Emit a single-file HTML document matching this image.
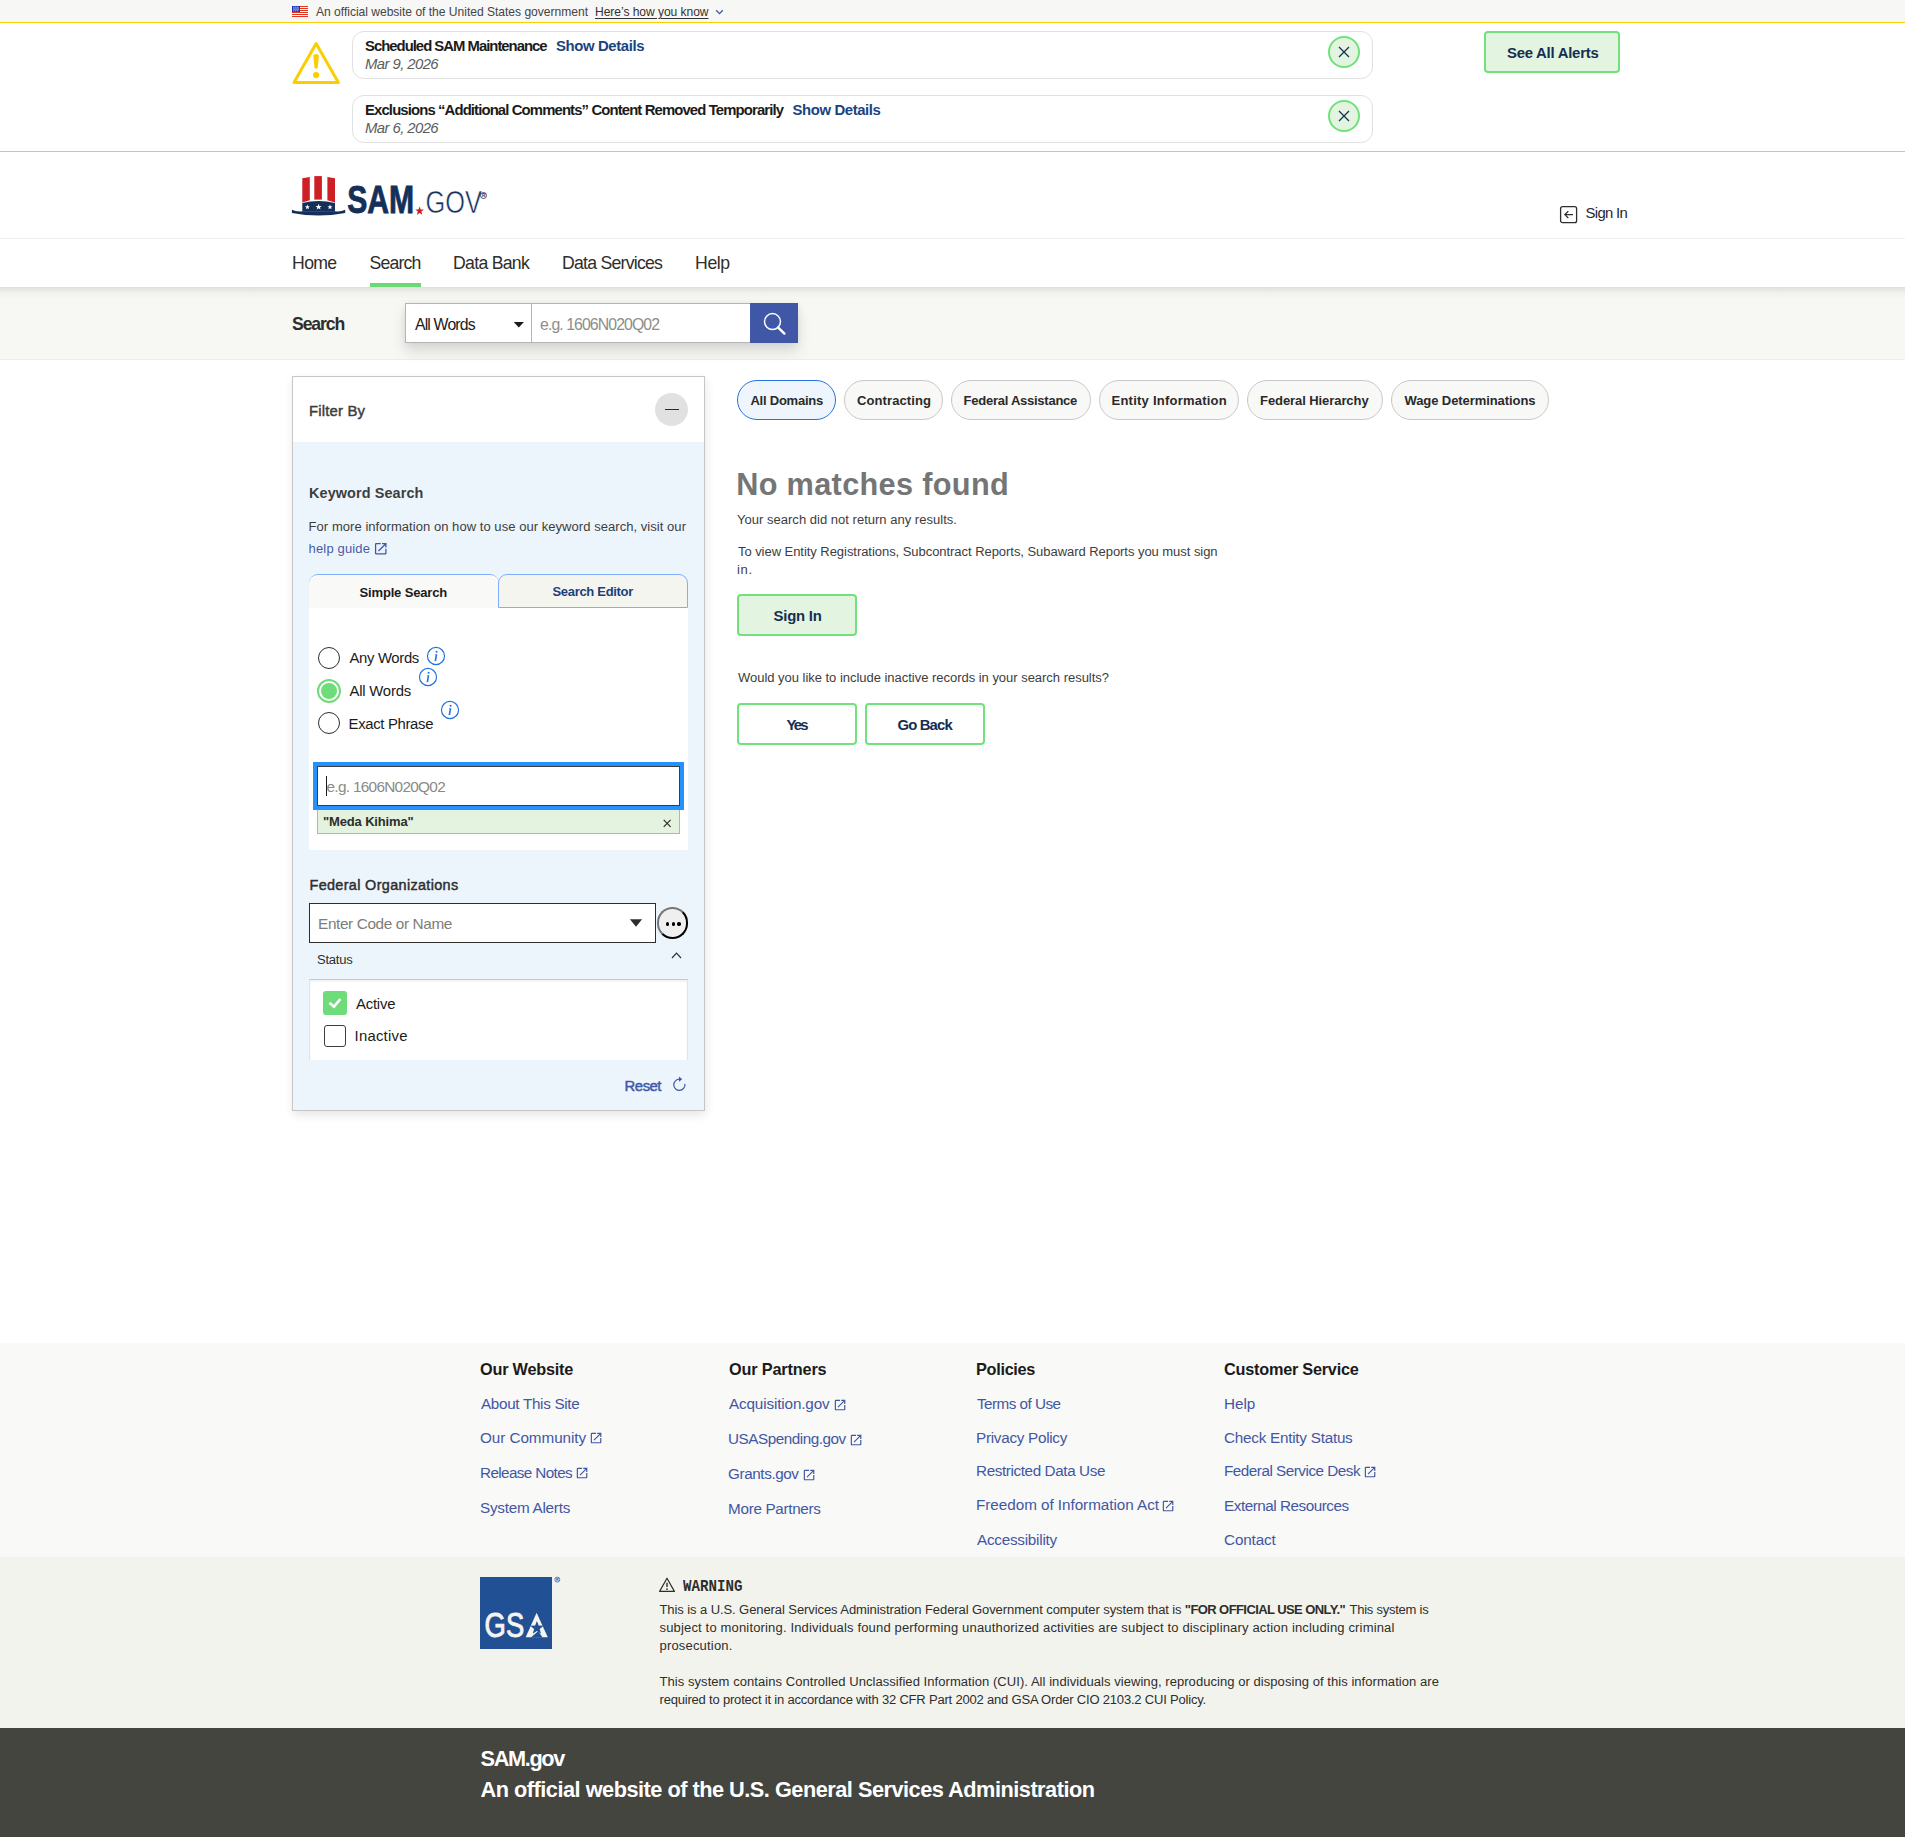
<!DOCTYPE html>
<html lang="en"><head><meta charset="utf-8"><title>SAM.gov | Search</title>
<style>
html,body{margin:0;padding:0;background:#fff}
body{width:1905px;height:1837px;position:relative;overflow:hidden;font-family:"Liberation Sans",sans-serif}
div,svg,span.t{position:absolute;box-sizing:border-box}
span.t{white-space:pre;line-height:1;display:block}
.m{font-family:"Liberation Mono",monospace}
svg{overflow:visible}
</style></head><body>
<div style="left:0px;top:0px;width:1905px;height:22px;background:#f7f7f5"></div>
<div style="left:0px;top:22px;width:1905px;height:1px;background:#face00"></div>
<svg style="left:292px;top:6px" width="16" height="11" viewBox="0 0 16 11"><rect width="16" height="11" fill="#fff"/><rect y="0" width="16" height="1" fill="#e0371f"/><rect y="2" width="16" height="1" fill="#e0371f"/><rect y="4" width="16" height="1" fill="#e0371f"/><rect y="6" width="16" height="1" fill="#e0371f"/><rect y="8" width="16" height="1" fill="#e0371f"/><rect y="10" width="16" height="1" fill="#e0371f"/><rect width="8" height="6" fill="#1e33b1"/><rect x="1.1" y="0.7" width="0.8" height="0.8" fill="#fff"/><rect x="1.1" y="2.6" width="0.8" height="0.8" fill="#fff"/><rect x="1.1" y="4.5" width="0.8" height="0.8" fill="#fff"/><rect x="3.1" y="0.7" width="0.8" height="0.8" fill="#fff"/><rect x="3.1" y="2.6" width="0.8" height="0.8" fill="#fff"/><rect x="3.1" y="4.5" width="0.8" height="0.8" fill="#fff"/><rect x="5.1" y="0.7" width="0.8" height="0.8" fill="#fff"/><rect x="5.1" y="2.6" width="0.8" height="0.8" fill="#fff"/><rect x="5.1" y="4.5" width="0.8" height="0.8" fill="#fff"/><rect x="2.1" y="1.6" width="0.8" height="0.8" fill="#fff"/><rect x="2.1" y="3.5" width="0.8" height="0.8" fill="#fff"/><rect x="4.1" y="1.6" width="0.8" height="0.8" fill="#fff"/><rect x="4.1" y="3.5" width="0.8" height="0.8" fill="#fff"/><rect x="6.1" y="1.6" width="0.8" height="0.8" fill="#fff"/><rect x="6.1" y="3.5" width="0.8" height="0.8" fill="#fff"/></svg>
<svg style="left:715px;top:8px" width="9" height="8" viewBox="0 0 9 8"><path d="M1.2 2.3 L4.5 5.6 L7.8 2.3" fill="none" stroke="#3f57a6" stroke-width="1.3"/></svg>
<div style="left:0px;top:151px;width:1905px;height:1px;background:#face00"></div>
<svg style="left:288px;top:38px" width="56" height="50" viewBox="0 0 56 50"><path d="M28.1 5.6 L6 44.5 L50.4 44.5 Z" fill="none" stroke="#face00" stroke-width="3" stroke-linejoin="round"/><path d="M25.3 17.4 Q28.1 14.6 30.9 17.4 L29.7 29.8 Q28.1 31.6 26.5 29.8 Z" fill="#face00"/><circle cx="28.1" cy="37.1" r="3.1" fill="#face00"/></svg>
<div style="left:352px;top:31px;width:1021px;height:48px;border:1px solid #dfe1e2;border-radius:12px;background:#fff"></div>
<div style="left:1328px;top:36px;width:32px;height:32px;border:2px solid #70e17b;border-radius:50%;background:#e3f5e1"></div>
<svg style="left:1338px;top:46px" width="12" height="12" viewBox="0 0 12 12"><path d="M1 1 L11 11 M11 1 L1 11" stroke="#162e51" stroke-width="1.3" fill="none"/></svg>
<div style="left:352px;top:95px;width:1021px;height:48px;border:1px solid #dfe1e2;border-radius:12px;background:#fff"></div>
<div style="left:1328px;top:100px;width:32px;height:32px;border:2px solid #70e17b;border-radius:50%;background:#e3f5e1"></div>
<svg style="left:1338px;top:110px" width="12" height="12" viewBox="0 0 12 12"><path d="M1 1 L11 11 M11 1 L1 11" stroke="#162e51" stroke-width="1.3" fill="none"/></svg>
<div style="left:1484px;top:31px;width:136px;height:42px;border:2px solid #70e17b;border-radius:4px;background:#e3f5e1"></div>
<svg style="left:0px;top:0px" width="600" height="240" viewBox="0 0 600 240"><polygon points="302.3,178.2 309.8,177 309.8,200.3 302.3,202.4" fill="#cd2026"/><rect x="314.3" y="176.1" width="7.6" height="23.5" fill="#cd2026"/><polygon points="327.4,177 335,178.2 335,202.4 327.4,200.3" fill="#cd2026"/><path d="M302.3 203 Q318.6 199 335 203 L335 211.5 L302.3 211.5 Z" fill="#14305a"/><path d="M291.9 209.7 Q296 211.8 302.5 211.3 L335 211.3 Q341 211.8 345.2 209.7 L345.2 212.9 Q318.6 218 291.9 212.9 Z" fill="#14305a"/><polygon points="307.40,204.60 308.04,206.32 309.87,206.40 308.44,207.54 308.93,209.30 307.40,208.29 305.87,209.30 306.36,207.54 304.93,206.40 306.76,206.32" fill="#fff"/><polygon points="318.60,203.80 319.39,205.91 321.64,206.01 319.88,207.42 320.48,209.59 318.60,208.34 316.72,209.59 317.32,207.42 315.56,206.01 317.81,205.91" fill="#fff"/><polygon points="330.00,204.60 330.64,206.32 332.47,206.40 331.04,207.54 331.53,209.30 330.00,208.29 328.47,209.30 328.96,207.54 327.53,206.40 329.36,206.32" fill="#fff"/><text x="347.2" y="212.9" font-family="Liberation Sans" font-weight="700" font-size="38.7" fill="#14305a" stroke="#14305a" stroke-width="0.9" textLength="66.9" lengthAdjust="spacingAndGlyphs">SAM</text><polygon points="419.60,206.50 420.71,209.47 423.88,209.61 421.40,211.58 422.25,214.64 419.60,212.89 416.95,214.64 417.80,211.58 415.32,209.61 418.49,209.47" fill="#cd2026"/><text x="425.6" y="213.2" font-family="Liberation Sans" font-size="31" fill="#14305a" stroke="#fff" stroke-width="0.55" textLength="56.4" lengthAdjust="spacingAndGlyphs">GOV</text><circle cx="483.5" cy="195.5" r="3" fill="none" stroke="#14305a" stroke-width="0.8"/><text x="481.9" y="197.3" font-family="Liberation Sans" font-weight="700" font-size="4.8" fill="#14305a">R</text></svg>
<svg style="left:1559px;top:205px" width="20" height="20" viewBox="0 0 20 20"><rect x="1.6" y="1.7" width="16" height="16" rx="2" fill="none" stroke="#2e2e2a" stroke-width="1.3"/><path d="M14 9.6 H6 M9.3 6.2 L5.8 9.6 L9.3 13" fill="none" stroke="#2e2e2a" stroke-width="1.2"/></svg>
<div style="left:0px;top:238px;width:1905px;height:1px;background:#f0f0ec"></div>
<div style="left:0px;top:287px;width:1905px;height:73px;background:#f7f7f4;border-bottom:1px solid #ededea"></div>
<div style="left:0px;top:287px;width:1905px;height:12px;background:linear-gradient(rgba(0,0,0,.10),rgba(0,0,0,.03) 45%,rgba(0,0,0,0))"></div>
<div style="left:370px;top:283px;width:51px;height:4px;background:#6ad974"></div>
<div style="left:405px;top:303px;width:393px;height:40px;background:#fff;box-shadow:0 8px 14px rgba(0,0,0,.13), 0 0 6px rgba(0,0,0,.06)"></div>
<div style="left:405px;top:303px;width:127px;height:40px;border:1px solid #b5b5b2;background:#fff"></div>
<div style="left:531px;top:303px;width:219px;height:40px;border:1px solid #b5b5b2;border-right:0;background:#fff"></div>
<svg style="left:513px;top:321px" width="12" height="8" viewBox="0 0 12 8"><path d="M0.7 1 H10.9 L5.8 6.6 Z" fill="#1b1b1b"/></svg>
<div style="left:750px;top:303px;width:48px;height:40px;background:#3f57a6"></div>
<svg style="left:760px;top:309px" width="30" height="30" viewBox="0 0 30 30"><circle cx="12.5" cy="12.6" r="8" fill="none" stroke="#fff" stroke-width="1.5"/><path d="M18 18.4 L24.4 24.6" stroke="#fff" stroke-width="2.4" stroke-linecap="round"/></svg>
<div style="left:292px;top:376px;width:413px;height:735px;border:1px solid #c6c6c6;background:#edf5fc;box-shadow:1px 4px 9px rgba(0,0,0,.10)"></div>
<div style="left:293px;top:377px;width:411px;height:65px;background:#fff"></div>
<div style="left:655px;top:393px;width:33px;height:33px;border-radius:50%;background:#e1e1e1"></div>
<div style="left:665px;top:409px;width:14px;height:1.4px;background:#0f2f66"></div>
<svg style="left:373.27px;top:540.87px" width="15.47" height="15.47" viewBox="0 0 24 24"><path d="M19 19H5V5h7V3H5a2 2 0 00-2 2v14a2 2 0 002 2h14c1.1 0 2-.9 2-2v-7h-2v7zM14 3v2h3.59l-9.83 9.83 1.41 1.41L19 6.41V10h2V3h-7z" fill="#3f57a6"/></svg>
<div style="left:309px;top:607px;width:379px;height:243px;background:#fff"></div>
<div style="left:309px;top:574px;width:190px;height:34px;background:#f9f9f7;border-top:1px solid #81aefc;border-radius:9px 9px 0 0"></div>
<div style="left:498px;top:574px;width:190px;height:34px;background:#f5f5f0;border:1px solid #81aefc;border-radius:9px 9px 0 0"></div>
<div style="left:318px;top:647px;width:22px;height:22px;border:1.5px solid #2e2e2e;border-radius:50%;background:#fff"></div>
<svg style="left:426.25px;top:646.3px" width="20" height="20" viewBox="0 0 20 20"><circle cx="10" cy="10" r="8.55" fill="none" stroke="#2672de" stroke-width="1.2"/><circle cx="10.6" cy="5.7" r="1.05" fill="#2672de"/><path d="M10.5 8.3 L9.4 14.9" stroke="#2672de" stroke-width="1.6" fill="none"/><path d="M9.3 8.7 H10.6 M8.6 14.6 H10.0" stroke="#2672de" stroke-width="0.8" fill="none"/></svg>
<div style="left:317px;top:679px;width:24px;height:24px;border:2px solid #6fdc7a;border-radius:50%;background:#fff"></div>
<div style="left:321px;top:683px;width:16px;height:16px;border-radius:50%;background:#6fdc7a"></div>
<svg style="left:418.35px;top:667.1px" width="20" height="20" viewBox="0 0 20 20"><circle cx="10" cy="10" r="8.55" fill="none" stroke="#2672de" stroke-width="1.2"/><circle cx="10.6" cy="5.7" r="1.05" fill="#2672de"/><path d="M10.5 8.3 L9.4 14.9" stroke="#2672de" stroke-width="1.6" fill="none"/><path d="M9.3 8.7 H10.6 M8.6 14.6 H10.0" stroke="#2672de" stroke-width="0.8" fill="none"/></svg>
<div style="left:318px;top:712px;width:22px;height:22px;border:1.5px solid #2e2e2e;border-radius:50%;background:#fff"></div>
<svg style="left:440.35px;top:700.2px" width="20" height="20" viewBox="0 0 20 20"><circle cx="10" cy="10" r="8.55" fill="none" stroke="#2672de" stroke-width="1.2"/><circle cx="10.6" cy="5.7" r="1.05" fill="#2672de"/><path d="M10.5 8.3 L9.4 14.9" stroke="#2672de" stroke-width="1.6" fill="none"/><path d="M9.3 8.7 H10.6 M8.6 14.6 H10.0" stroke="#2672de" stroke-width="0.8" fill="none"/></svg>
<div style="left:317px;top:809px;width:363px;height:25px;border:1px solid #70e17b;background:#e3f3e0"></div>
<div style="left:313px;top:762px;width:371px;height:48px;background:#2491ff"></div>
<div style="left:317px;top:766px;width:363px;height:40px;border:1px solid #3d3d3d;background:#fff"></div>
<svg style="left:662px;top:818px" width="10" height="10" viewBox="0 0 10 10"><path d="M1.7 1.9 L8.6 8.8 M8.6 1.9 L1.7 8.8" stroke="#2e2e2a" stroke-width="1.2" fill="none"/></svg>
<div style="left:309px;top:903px;width:347px;height:40px;border:1px solid #2e2e2a;background:#fff"></div>
<svg style="left:629px;top:918px" width="14" height="10" viewBox="0 0 14 10"><path d="M0.9 1.3 H13.1 L7 8.7 Z" fill="#2e2e2a"/></svg>
<div style="left:656.7px;top:907px;width:31.5px;height:31.5px;border:2px solid;border-color:#767676 #000 #000 #767676;border-radius:50%;background:#efefef"></div>
<div style="left:665.6px;top:922.4px;width:3.4px;height:3.4px;border-radius:50%;background:#000"></div>
<div style="left:671.5px;top:922.4px;width:3.4px;height:3.4px;border-radius:50%;background:#000"></div>
<div style="left:677.4px;top:922.4px;width:3.4px;height:3.4px;border-radius:50%;background:#000"></div>
<svg style="left:670px;top:949.6px" width="14" height="10" viewBox="0 0 14 10"><path d="M2 8 L6.5 3.2 L11 8" fill="none" stroke="#2e2e2a" stroke-width="1.15"/></svg>
<div style="left:309px;top:979px;width:379px;height:81px;background:#fff;border:1px solid #e3e3e1;border-top-color:#c9c9c9;border-bottom:0;box-shadow:inset 0 2px 2px rgba(0,0,0,.05)"></div>
<div style="left:323px;top:991px;width:24px;height:24px;border-radius:3px;background:#6fdc7a"></div>
<svg style="left:323px;top:991px" width="24" height="24" viewBox="0 0 24 24"><path d="M6.4 11.8 L11 15.6 L17.4 8" fill="none" stroke="#fff" stroke-width="2.6" stroke-linejoin="miter"/></svg>
<div style="left:324px;top:1025px;width:22px;height:22px;border:1.5px solid #3d3d3d;border-radius:3px;background:#fff"></div>
<svg style="left:671px;top:1075px" width="18" height="18" viewBox="0 0 18 18"><path d="M13.9 8.9 A5.6 5.6 0 1 1 8.6 4.2" fill="none" stroke="#3f57a6" stroke-width="1.2"/><path d="M8 1.4 L11.2 4.2 L8 6.8 Z" fill="#3f57a6"/></svg>
<div style="left:737.1px;top:380px;width:98.7px;height:40px;border:1px solid #2672de;background:#eef5fc;border-radius:20px"></div>
<div style="left:844.2px;top:380px;width:98.5px;height:40px;border:1px solid #c9c9c9;background:#f8f8f6;border-radius:20px"></div>
<div style="left:951.1px;top:380px;width:139.8px;height:40px;border:1px solid #c9c9c9;background:#f8f8f6;border-radius:20px"></div>
<div style="left:1098.9px;top:380px;width:139.9px;height:40px;border:1px solid #c9c9c9;background:#f8f8f6;border-radius:20px"></div>
<div style="left:1247.4px;top:380px;width:135.3px;height:40px;border:1px solid #c9c9c9;background:#f8f8f6;border-radius:20px"></div>
<div style="left:1391.1px;top:380px;width:157.9px;height:40px;border:1px solid #c9c9c9;background:#f8f8f6;border-radius:20px"></div>
<div style="left:737px;top:594px;width:120px;height:42px;border:2px solid #70e17b;border-radius:4px;background:#e3f5e1"></div>
<div style="left:737px;top:703px;width:120px;height:42px;border:2px solid #70e17b;border-radius:4px;background:#fff"></div>
<div style="left:865px;top:703px;width:120px;height:42px;border:2px solid #70e17b;border-radius:4px;background:#fff"></div>
<div style="left:0px;top:1343px;width:1905px;height:214px;background:#f9f9f7"></div>
<svg style="left:588.63px;top:1431.03px" width="14.13" height="14.13" viewBox="0 0 24 24"><path d="M19 19H5V5h7V3H5a2 2 0 00-2 2v14a2 2 0 002 2h14c1.1 0 2-.9 2-2v-7h-2v7zM14 3v2h3.59l-9.83 9.83 1.41 1.41L19 6.41V10h2V3h-7z" fill="#4157a4"/></svg>
<svg style="left:574.83px;top:1466.13px" width="14.13" height="14.13" viewBox="0 0 24 24"><path d="M19 19H5V5h7V3H5a2 2 0 00-2 2v14a2 2 0 002 2h14c1.1 0 2-.9 2-2v-7h-2v7zM14 3v2h3.59l-9.83 9.83 1.41 1.41L19 6.41V10h2V3h-7z" fill="#4157a4"/></svg>
<svg style="left:832.53px;top:1398.03px" width="14.13" height="14.13" viewBox="0 0 24 24"><path d="M19 19H5V5h7V3H5a2 2 0 00-2 2v14a2 2 0 002 2h14c1.1 0 2-.9 2-2v-7h-2v7zM14 3v2h3.59l-9.83 9.83 1.41 1.41L19 6.41V10h2V3h-7z" fill="#4157a4"/></svg>
<svg style="left:848.93px;top:1433.03px" width="14.13" height="14.13" viewBox="0 0 24 24"><path d="M19 19H5V5h7V3H5a2 2 0 00-2 2v14a2 2 0 002 2h14c1.1 0 2-.9 2-2v-7h-2v7zM14 3v2h3.59l-9.83 9.83 1.41 1.41L19 6.41V10h2V3h-7z" fill="#4157a4"/></svg>
<svg style="left:801.53px;top:1468.13px" width="14.13" height="14.13" viewBox="0 0 24 24"><path d="M19 19H5V5h7V3H5a2 2 0 00-2 2v14a2 2 0 002 2h14c1.1 0 2-.9 2-2v-7h-2v7zM14 3v2h3.59l-9.83 9.83 1.41 1.41L19 6.41V10h2V3h-7z" fill="#4157a4"/></svg>
<svg style="left:1161.03px;top:1498.73px" width="14.13" height="14.13" viewBox="0 0 24 24"><path d="M19 19H5V5h7V3H5a2 2 0 00-2 2v14a2 2 0 002 2h14c1.1 0 2-.9 2-2v-7h-2v7zM14 3v2h3.59l-9.83 9.83 1.41 1.41L19 6.41V10h2V3h-7z" fill="#4157a4"/></svg>
<svg style="left:1363.13px;top:1465.03px" width="14.13" height="14.13" viewBox="0 0 24 24"><path d="M19 19H5V5h7V3H5a2 2 0 00-2 2v14a2 2 0 002 2h14c1.1 0 2-.9 2-2v-7h-2v7zM14 3v2h3.59l-9.83 9.83 1.41 1.41L19 6.41V10h2V3h-7z" fill="#4157a4"/></svg>
<div style="left:0px;top:1557px;width:1905px;height:171px;background:#f3f3ee"></div>
<div style="left:480px;top:1577px;width:72px;height:72px;background:#225095"></div>
<svg style="left:0px;top:0px" width="600" height="1700" viewBox="0 0 600 1700"><text x="484.6" y="1637.2" font-family="Liberation Sans" font-size="34.2" fill="#f5f5f0" stroke="#f5f5f0" stroke-width="0.9" textLength="39.6" lengthAdjust="spacingAndGlyphs">GS</text><polygon points="536.6,1612.7 525.7,1637.3 547.8,1637.3" fill="#f5f5f0"/><polygon points="536.90,1621.00 538.63,1625.62 543.56,1625.84 539.70,1628.91 541.01,1633.66 536.90,1630.94 532.79,1633.66 534.10,1628.91 530.24,1625.84 535.17,1625.62" fill="#225095"/><polygon points="530.8,1637.6 542.6,1637.6 538.2,1631.2" fill="#225095"/><circle cx="557.3" cy="1579.6" r="2.5" fill="none" stroke="#225095" stroke-width="0.7"/><text x="556.0" y="1581.1" font-family="Liberation Sans" font-weight="700" font-size="3.8" fill="#225095">R</text></svg>
<svg style="left:658px;top:1576px" width="18" height="17" viewBox="0 0 18 17"><path d="M9 2.2 L1.6 15.4 L16.4 15.4 Z" fill="none" stroke="#2e2e2a" stroke-width="1.2" stroke-linejoin="round"/><path d="M9 6.8 V11" stroke="#2e2e2a" stroke-width="1.4"/><circle cx="9" cy="13.1" r="0.9" fill="#2e2e2a"/></svg>
<div style="left:0px;top:1728px;width:1905px;height:109px;background:#454540"></div>
<span class="t" style="left:316.0px;top:6px;font-size:12.09px;color:#454545;letter-spacing:-0.021px;">An official website of the United States government</span>
<span class="t" style="left:595.06px;top:6px;font-size:12.09px;color:#333;text-decoration:underline;text-underline-offset:2px;letter-spacing:-0.058px;">Here’s how you know</span>
<span class="t" style="left:365.06px;top:39px;font-size:14.88px;color:#1b1b1b;font-weight:700;letter-spacing:-1.005px;">Scheduled SAM Maintenance</span>
<span class="t" style="left:556.06px;top:39px;font-size:14.88px;color:#1a4480;font-weight:700;letter-spacing:-0.383px;">Show Details</span>
<span class="t" style="left:365.06px;top:57px;font-size:14.88px;color:#5c5c5c;font-style:italic;letter-spacing:-0.581px;">Mar 9, 2026</span>
<span class="t" style="left:365.06px;top:103px;font-size:14.88px;color:#1b1b1b;font-weight:700;letter-spacing:-0.88px;">Exclusions “Additional Comments” Content Removed Temporarily</span>
<span class="t" style="left:792.54px;top:103px;font-size:14.88px;color:#1a4480;font-weight:700;letter-spacing:-0.383px;">Show Details</span>
<span class="t" style="left:365.06px;top:121px;font-size:14.88px;color:#5c5c5c;font-style:italic;letter-spacing:-0.581px;">Mar 6, 2026</span>
<span class="t" style="left:1506.98px;top:46px;font-size:14.88px;color:#162e51;font-weight:700;letter-spacing:-0.237px;">See All Alerts</span>
<span class="t" style="left:1585.56px;top:206px;font-size:14.88px;color:#1f2733;letter-spacing:-0.685px;">Sign In</span>
<span class="t" style="left:292.06px;top:255px;font-size:17.67px;color:#2e2e2a;letter-spacing:-0.652px;">Home</span>
<span class="t" style="left:369.56px;top:255px;font-size:17.67px;color:#2e2e2a;letter-spacing:-0.818px;">Search</span>
<span class="t" style="left:453.08px;top:255px;font-size:17.67px;color:#2e2e2a;letter-spacing:-0.717px;">Data Bank</span>
<span class="t" style="left:562.08px;top:255px;font-size:17.67px;color:#2e2e2a;letter-spacing:-0.762px;">Data Services</span>
<span class="t" style="left:695.08px;top:255px;font-size:17.67px;color:#2e2e2a;letter-spacing:-0.447px;">Help</span>
<span class="t" style="left:292.06px;top:316px;font-size:17.67px;color:#2e2e2a;font-weight:700;letter-spacing:-1.148px;">Search</span>
<span class="t" style="left:414.92px;top:317px;font-size:15.81px;color:#1b1b1b;letter-spacing:-0.817px;">All Words</span>
<span class="t" style="left:540.04px;top:317px;font-size:15.81px;color:#8d8d8a;letter-spacing:-0.907px;">e.g. 1606N020Q02</span>
<span class="t" style="left:309.06px;top:404px;font-size:14.88px;color:#3d3d3d;-webkit-text-stroke:0.45px;letter-spacing:0.163px;">Filter By</span>
<span class="t" style="left:309.06px;top:486px;font-size:14.42px;color:#3d3d3d;font-weight:700;letter-spacing:0.111px;">Keyword Search</span>
<span class="t" style="left:308.6px;top:520px;font-size:13.02px;color:#3d3d3d;letter-spacing:0.042px;">For more information on how to use our keyword search, visit our</span>
<span class="t" style="left:308.6px;top:542px;font-size:13.02px;color:#4a5aa8;letter-spacing:0.142px;">help guide</span>
<span class="t" style="left:359.54px;top:586px;font-size:13.02px;color:#1b1b1b;font-weight:700;letter-spacing:-0.17px;">Simple Search</span>
<span class="t" style="left:552.5px;top:585px;font-size:13.02px;color:#1c3f7c;font-weight:700;letter-spacing:-0.319px;">Search Editor</span>
<span class="t" style="left:349.46px;top:651px;font-size:14.88px;color:#1b1b1b;letter-spacing:-0.331px;">Any Words</span>
<span class="t" style="left:349.46px;top:684px;font-size:14.88px;color:#1b1b1b;letter-spacing:-0.208px;">All Words</span>
<span class="t" style="left:348.58px;top:717px;font-size:14.88px;color:#1b1b1b;letter-spacing:-0.331px;">Exact Phrase</span>
<span class="t" style="left:326.52px;top:779px;font-size:15.35px;color:#8a8a88;letter-spacing:-0.699px;">e.g. 1606N020Q02</span>
<span class="t" style="left:323.06px;top:815px;font-size:13.02px;color:#2e2e2a;font-weight:700;letter-spacing:-0.163px;">"Meda Kihima"</span>
<span class="t" style="left:309.52px;top:878px;font-size:14.42px;color:#2e2e2e;-webkit-text-stroke:0.45px;letter-spacing:0.345px;">Federal Organizations</span>
<span class="t" style="left:318.06px;top:916px;font-size:15.35px;color:#7d7d7a;letter-spacing:-0.376px;">Enter Code or Name</span>
<span class="t" style="left:317.04px;top:953px;font-size:13.02px;color:#2e2e2e;letter-spacing:-0.234px;">Status</span>
<span class="t" style="left:355.92px;top:997px;font-size:14.88px;color:#1b1b1b;letter-spacing:-0.175px;">Active</span>
<span class="t" style="left:354.6px;top:1029px;font-size:14.88px;color:#1b1b1b;letter-spacing:0.222px;">Inactive</span>
<span class="t" style="left:624.58px;top:1079px;font-size:14.88px;color:#3f57a6;-webkit-text-stroke:0.45px;letter-spacing:-0.484px;">Reset</span>
<span class="t" style="left:750.48px;top:394px;font-size:13.02px;color:#2a2a2a;font-weight:700;letter-spacing:-0.247px;">All Domains</span>
<span class="t" style="left:857.04px;top:394px;font-size:13.02px;color:#2a2a2a;font-weight:700;letter-spacing:0.087px;">Contracting</span>
<span class="t" style="left:963.58px;top:394px;font-size:13.02px;color:#2a2a2a;font-weight:700;letter-spacing:-0.262px;">Federal Assistance</span>
<span class="t" style="left:1111.54px;top:394px;font-size:13.02px;color:#2a2a2a;font-weight:700;letter-spacing:0.225px;">Entity Information</span>
<span class="t" style="left:1260.06px;top:394px;font-size:13.02px;color:#2a2a2a;font-weight:700;letter-spacing:-0.087px;">Federal Hierarchy</span>
<span class="t" style="left:1404.44px;top:394px;font-size:13.02px;color:#2a2a2a;font-weight:700;letter-spacing:-0.083px;">Wage Determinations</span>
<span class="t" style="left:736.22px;top:470px;font-size:30.69px;color:#757575;font-weight:700;letter-spacing:0.323px;">No matches found</span>
<span class="t" style="left:737.06px;top:513px;font-size:13.02px;color:#3d3d3d;letter-spacing:0.01px;">Your search did not return any results.</span>
<span class="t" style="left:737.96px;top:545px;font-size:13.02px;color:#3d3d3d;letter-spacing:-0.054px;">To view Entity Registrations, Subcontract Reports, Subaward Reports you must sign</span>
<span class="t" style="left:737.06px;top:563px;font-size:13.02px;color:#3d3d3d;letter-spacing:0.603px;">in.</span>
<span class="t" style="left:773.52px;top:609px;font-size:14.88px;color:#162e51;font-weight:700;letter-spacing:-0.222px;">Sign In</span>
<span class="t" style="left:737.96px;top:671px;font-size:13.02px;color:#3d3d3d;letter-spacing:-0.031px;">Would you like to include inactive records in your search results?</span>
<span class="t" style="left:786.46px;top:718px;font-size:14.88px;color:#162e51;font-weight:700;letter-spacing:-1.739px;">Yes</span>
<span class="t" style="left:897.48px;top:718px;font-size:14.88px;color:#162e51;font-weight:700;letter-spacing:-0.847px;">Go Back</span>
<span class="t" style="left:480.06px;top:1361px;font-size:16.28px;color:#1b1b1b;font-weight:700;letter-spacing:-0.229px;">Our Website</span>
<span class="t" style="left:480.96px;top:1396px;font-size:15.25px;color:#4157a4;letter-spacing:-0.308px;">About This Site</span>
<span class="t" style="left:480.06px;top:1430px;font-size:15.25px;color:#4157a4;letter-spacing:-0.06px;">Our Community</span>
<span class="t" style="left:480.06px;top:1465px;font-size:15.25px;color:#4157a4;letter-spacing:-0.617px;">Release Notes</span>
<span class="t" style="left:480.06px;top:1500px;font-size:15.25px;color:#4157a4;letter-spacing:-0.25px;">System Alerts</span>
<span class="t" style="left:728.98px;top:1361px;font-size:16.28px;color:#1b1b1b;font-weight:700;letter-spacing:-0.162px;">Our Partners</span>
<span class="t" style="left:728.98px;top:1396px;font-size:15.25px;color:#4157a4;letter-spacing:-0.136px;">Acquisition.gov</span>
<span class="t" style="left:728.08px;top:1431px;font-size:15.25px;color:#4157a4;letter-spacing:-0.474px;">USASpending.gov</span>
<span class="t" style="left:728.08px;top:1466px;font-size:15.25px;color:#4157a4;letter-spacing:-0.409px;">Grants.gov</span>
<span class="t" style="left:728.08px;top:1501px;font-size:15.25px;color:#4157a4;letter-spacing:-0.316px;">More Partners</span>
<span class="t" style="left:976.06px;top:1361px;font-size:16.28px;color:#1b1b1b;font-weight:700;letter-spacing:-0.311px;">Policies</span>
<span class="t" style="left:976.96px;top:1396px;font-size:15.25px;color:#4157a4;letter-spacing:-0.525px;">Terms of Use</span>
<span class="t" style="left:976.06px;top:1430px;font-size:15.25px;color:#4157a4;letter-spacing:-0.279px;">Privacy Policy</span>
<span class="t" style="left:976.06px;top:1463px;font-size:15.25px;color:#4157a4;letter-spacing:-0.394px;">Restricted Data Use</span>
<span class="t" style="left:976.06px;top:1497px;font-size:15.25px;color:#4157a4;letter-spacing:-0.039px;">Freedom of Information Act</span>
<span class="t" style="left:976.96px;top:1532px;font-size:15.25px;color:#4157a4;letter-spacing:-0.235px;">Accessibility</span>
<span class="t" style="left:1224.06px;top:1361px;font-size:16.28px;color:#1b1b1b;font-weight:700;letter-spacing:-0.24px;">Customer Service</span>
<span class="t" style="left:1224.06px;top:1396px;font-size:15.25px;color:#4157a4;letter-spacing:-0.054px;">Help</span>
<span class="t" style="left:1224.06px;top:1430px;font-size:15.25px;color:#4157a4;letter-spacing:-0.243px;">Check Entity Status</span>
<span class="t" style="left:1224.06px;top:1463px;font-size:15.25px;color:#4157a4;letter-spacing:-0.489px;">Federal Service Desk</span>
<span class="t" style="left:1224.06px;top:1498px;font-size:15.25px;color:#4157a4;letter-spacing:-0.476px;">External Resources</span>
<span class="t" style="left:1224.06px;top:1532px;font-size:15.25px;color:#4157a4;letter-spacing:-0.149px;">Contact</span>
<span class="t m" style="left:683.2px;top:1579px;font-size:16.9px;color:#2e2e2a;font-weight:700;transform:scaleX(.838);transform-origin:0 0;">WARNING</span>
<span class="t" style="left:659.5px;top:1603px;font-size:13.02px;color:#2e2e2a;letter-spacing:-0.092px;">This is a U.S. General Services Administration Federal Government computer system that is</span>
<span class="t" style="left:1184.81px;top:1603px;font-size:13.02px;color:#2e2e2a;font-weight:700;letter-spacing:-0.589px;">"FOR OFFICIAL USE ONLY."</span>
<span class="t" style="left:1349.48px;top:1603px;font-size:13.02px;color:#2e2e2a;letter-spacing:-0.245px;">This system is</span>
<span class="t" style="left:659.5px;top:1621px;font-size:13.02px;color:#2e2e2a;letter-spacing:0.157px;">subject to monitoring. Individuals found performing unauthorized activities are subject to disciplinary action including criminal</span>
<span class="t" style="left:659.5px;top:1639px;font-size:13.02px;color:#2e2e2a;letter-spacing:0.174px;">prosecution.</span>
<span class="t" style="left:659.5px;top:1675px;font-size:13.02px;color:#2e2e2a;letter-spacing:0.05px;">This system contains Controlled Unclassified Information (CUI). All individuals viewing, reproducing or disposing of this information are</span>
<span class="t" style="left:659.5px;top:1693px;font-size:13.02px;color:#2e2e2a;letter-spacing:-0.2px;">required to protect it in accordance with 32 CFR Part 2002 and GSA Order CIO 2103.2 CUI Policy.</span>
<span class="t" style="left:480.52px;top:1748px;font-size:21.76px;color:#fff;font-weight:700;letter-spacing:-1.372px;">SAM.gov</span>
<span class="t" style="left:480.52px;top:1779px;font-size:21.76px;color:#fff;font-weight:700;letter-spacing:-0.505px;">An official website of the U.S. General Services Administration</span>
<div style="left:326px;top:776px;width:1px;height:20px;background:#1b1b1b"></div>
</body></html>
